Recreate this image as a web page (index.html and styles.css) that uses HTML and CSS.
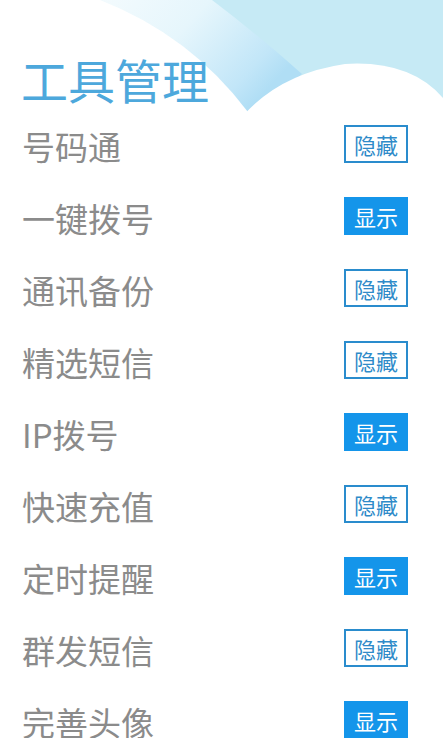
FILE: index.html
```html
<!DOCTYPE html>
<html lang="zh">
<head>
<meta charset="utf-8">
<link rel="stylesheet" href="styles.css">
</head>
<body>
<div class="page">
  <svg class="sky" width="443" height="130" viewBox="0 0 443 130" aria-hidden="true">
    <defs>
      <linearGradient id="band" x1="0" y1="0" x2="1" y2="0.4">
        <stop offset="0" stop-color="#ffffff"/>
        <stop offset="0.6" stop-color="#e6f6fc"/>
        <stop offset="0.9" stop-color="#c2e6f8"/>
        <stop offset="1" stop-color="#b0def5"/>
      </linearGradient>
    </defs>
    <rect x="0" y="0" width="443" height="130" fill="#c6eaf5"/>
    <path d="M60 0 L212 0 Q262 38 302 74 L250 120 L0 130 Z" fill="url(#band)"/>
    <path d="M0 0 L100 0 Q190 35 248 112 L250 130 L0 130 Z" fill="#ffffff"/>
    <path d="M232 130 Q270 75 345 64 Q410 60 443 98 L443 130 Z" fill="#ffffff"/>
  </svg>
  <h1 class="title">工具管理</h1>
  <ul class="list">
    <li class="row"><span class="label">号码通</span><span class="btn hide">隐藏</span></li>
    <li class="row"><span class="label">一键拨号</span><span class="btn show">显示</span></li>
    <li class="row"><span class="label">通讯备份</span><span class="btn hide">隐藏</span></li>
    <li class="row"><span class="label">精选短信</span><span class="btn hide">隐藏</span></li>
    <li class="row"><span class="label">IP拨号</span><span class="btn show">显示</span></li>
    <li class="row"><span class="label">快速充值</span><span class="btn hide">隐藏</span></li>
    <li class="row"><span class="label">定时提醒</span><span class="btn show">显示</span></li>
    <li class="row"><span class="label">群发短信</span><span class="btn hide">隐藏</span></li>
    <li class="row"><span class="label">完善头像</span><span class="btn show">显示</span></li>
  </ul>
</div>
</body>
</html>
```
FILE: styles.css
```css
html, body {
  margin: 0;
  padding: 0;
  background: #ffffff;
  overflow: hidden;
}
body {
  font-family: "Noto Sans CJK SC", "Noto Sans", sans-serif;
}
.page {
  position: relative;
  width: 443px;
  height: 738px;
  overflow: hidden;
}
.sky {
  position: absolute;
  left: 0;
  top: 0;
  display: block;
}
.title {
  position: relative;
  margin: 0;
  padding: 50px 0 0 21px;
  height: 58px;
  font-size: 47px;
  line-height: 58px;
  font-weight: 400;
  color: #4da8dc;
}
.list {
  position: relative;
  list-style: none;
  margin: 0;
  padding: 0 35px 0 22px;
}
.row {
  height: 72px;
  display: flex;
  align-items: center;
  justify-content: space-between;
}
.label {
  font-size: 33px;
  line-height: 40px;
  color: #8b8b8b;
  padding-top: 3px;
}
.btn {
  box-sizing: border-box;
  width: 64px;
  height: 38px;
  display: flex;
  align-items: center;
  justify-content: center;
  font-size: 22px;
  line-height: 1;
}
.hide {
  border: 2px solid #2a8ccd;
  color: #2f8bc9;
  background: #ffffff;
}
.show {
  background: #1495ea;
  color: #ffffff;
}
```
